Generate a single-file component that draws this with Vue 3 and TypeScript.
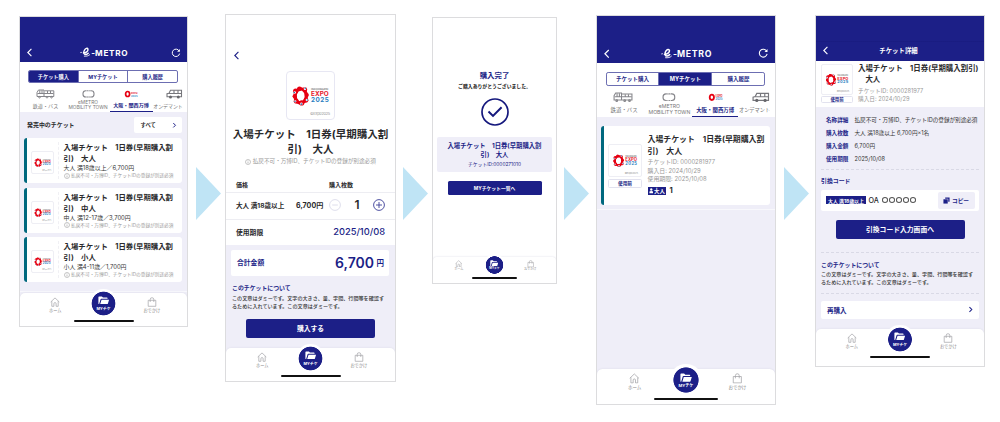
<script setup lang="ts">
type Kind = 'shop' | 'buy' | 'done' | 'mine' | 'detail'

const screens: Kind[] = ['shop', 'buy', 'done', 'mine', 'detail']
const segments = ['チケット購入', 'MYチケット', '購入履歴']
const activeSegment: Partial<Record<Kind, number>> = { shop: 0, mine: 1 }

const tickets = [
  { who: '大人', detail: '大人 満18歳以上／6,700円' },
  { who: '中人', detail: '中人 満12-17歳／3,700円' },
  { who: '小人', detail: '小人 満4-11歳／1,700円' },
]

const details = [
  ['名称詳細', '払戻不可・万博ID、チケットIDの登録が別途必須'],
  ['購入枚数', '大人 満18歳以上 6,700円×1名'],
  ['購入金額', '6,700円'],
  ['使用期限', '2025/10/08'],
]
</script>

<template>
  <svg class="defs" width="60" height="60" aria-hidden="true">
    <symbol id="expo" viewBox="0 0 49 49">
      <ellipse cx="14.3" cy="25" rx="5.9" ry="7.4" fill="none" stroke="#e60012" stroke-width="3.6" />
      <g fill="#e60012">
        <circle cx="9" cy="20" r="2.7" /><circle cx="13" cy="17.5" r="2.5" /><circle cx="18.5" cy="18.5" r="2.6" />
        <circle cx="20.6" cy="24" r="2.2" /><circle cx="19.8" cy="29.5" r="2.6" /><circle cx="15.3" cy="32.2" r="2.7" />
        <circle cx="9.6" cy="30.4" r="2.6" /><circle cx="8" cy="25.4" r="2.2" />
      </g>
      <g fill="#fff">
        <circle cx="8" cy="21.3" r="1.3" /><circle cx="18.7" cy="17.4" r="1.3" /><circle cx="20.8" cy="29.2" r="1.3" />
        <circle cx="15" cy="33" r="1.3" /><circle cx="8.6" cy="30.6" r="1.2" />
      </g>
      <g fill="#1b6fb5">
        <circle cx="7.6" cy="21.4" r=".8" /><circle cx="19" cy="17" r=".8" /><circle cx="21.2" cy="29.3" r=".8" />
        <circle cx="15" cy="33.5" r=".8" /><circle cx="8.3" cy="30.8" r=".7" />
      </g>
      <text x="25" y="18.9" font-size="2.4" textLength="18" fill="#666">OSAKA, KANSAI, JAPAN</text>
      <text x="25" y="25" font-size="6.6" font-weight="700" textLength="18.5" fill="#e6192a">EXPO</text>
      <text x="25" y="31.2" font-size="6.6" font-weight="700" textLength="18.5" fill="#2a80bf">2025</text>
      <text x="24" y="45.2" font-size="4" textLength="21" fill="#999">©Expo2025</text>
    </symbol>
    <symbol id="expo-mini" viewBox="0 0 14 10">
      <ellipse cx="3.6" cy="5" rx="2" ry="2.5" fill="none" stroke="#e60012" stroke-width="1.7" />
      <text x="7" y="4.8" font-size="2.7" font-weight="700" textLength="6.6" fill="#e6394a">EXPO</text>
      <text x="7" y="7.5" font-size="2.7" font-weight="700" textLength="6.6" fill="#4a95cc">2025</text>
    </symbol>
    <symbol id="brand" viewBox="0 0 12 11">
      <g fill="none" stroke="#fff" stroke-linecap="round">
        <path d="M.5 5.8c.5-.6 1-.5 1.3 .1" stroke-width=".9" />
        <path d="M3.6 6.3C6 6.2 8.7 4.4 8.3 2.4 7.9 .8 5.8 1.2 4.6 3.4 3.3 5.8 3.9 8 6 7.9 7 7.8 8 7.2 8.6 6.5" stroke-width="1.5" />
        <path d="M4.5 9.6C6.7 9.8 8.9 9.4 10.2 8.1" stroke-width=".9" />
      </g>
    </symbol>
    <symbol id="train" viewBox="0 0 19 10">
      <g fill="none" stroke="#85858a" stroke-width="1">
        <path d="M2.5 1h5.5v6.5H1V3.5zM8.5 1.800h9.3v5.700H8" />
        <path d="M1.5 4.5H17.5M3.8 1.2v3.3M6 1.2v3.3M11.5 2v2.5M14.5 2v2.5" />
        <circle cx="3.5" cy="8.2" r=".8" /><circle cx="11" cy="8.2" r=".8" /><circle cx="15.5" cy="8.2" r=".8" />
      </g>
    </symbol>
    <symbol id="loop" viewBox="0 0 13 9">
      <rect x="1" y="1.3" width="11" height="6.2" rx="2.8" fill="none" stroke="#85858a" stroke-width="1.1" />
      <path d="M4.5 1.3h4M4.5 7.5h4" stroke="#fff" stroke-width="1.2" stroke-dasharray=".6 1" />
    </symbol>
    <symbol id="van" viewBox="0 0 17 10">
      <g fill="none" stroke="#77777c" stroke-width="1.1">
        <path d="M1 7.8V4.8L3 4.3 4.5 1.3H15.5V7.8z" />
        <path d="M3 4.5H15.5M8 1.3v3.2M12 1.3v3.2" />
      </g>
      <circle cx="4.5" cy="7.9" r="1.5" fill="#66666b" /><circle cx="12.3" cy="7.9" r="1.5" fill="#66666b" />
    </symbol>
    <symbol id="back" viewBox="0 0 6 8">
      <path d="M4.7 .8 1.5 4l3.2 3.2" fill="none" stroke="currentColor" stroke-width="1" />
    </symbol>
    <symbol id="next" viewBox="0 0 6 8">
      <path d="M1.5 1.3 4.2 4 1.5 6.7" fill="none" stroke="currentColor" stroke-width="1.2" />
    </symbol>
    <symbol id="reload" viewBox="0 0 10 10">
      <path d="M8.2 3A3.7 3.7 0 1 0 8.6 5.6" fill="none" stroke="#fff" stroke-width="1" />
      <path d="M8.9 1v2.8H6.1z" fill="#fff" />
    </symbol>
    <symbol id="info" viewBox="0 0 10 10">
      <circle cx="5" cy="5" r="4.2" fill="none" stroke="#999" stroke-width=".9" />
      <path d="M5 4.3v3.2M5 2.5v1" stroke="#999" stroke-width="1" />
    </symbol>
    <symbol id="home" viewBox="0 0 10 10">
      <path d="M.7 5 5 .9 9.3 5M1.8 4.2V9.3H3.9V6.6Q3.9 5.6 5 5.6T6.1 6.6V9.3H8.2V4.2" fill="none" stroke="#a2a2a6" stroke-width=".7" stroke-linejoin="round" />
    </symbol>
    <symbol id="bag" viewBox="0 0 10 10">
      <path d="M1.2 3.3H8.8V9.3H1.2zM3.2 5V2.5Q3.2 .7 5 .7T6.8 2.5V5" fill="none" stroke="#a2a2a6" stroke-width=".7" stroke-linejoin="round" />
    </symbol>
    <symbol id="folder" viewBox="0 0 12 9">
      <path d="M.4 8V1.2Q.4 .5 1.1 .5H4L5.2 1.7H9.3Q10 1.7 10 2.4V3H3.4Q2.8 3 2.6 3.6L1.2 8.5Q.4 8.5 .4 8z" fill="#fff" />
      <path d="M3.7 3.9H11.6L10.3 8.1Q10.2 8.5 9.7 8.5H2.3z" fill="#fff" />
    </symbol>
  </svg>

  <main class="stage">
    <template v-for="(kind, i) in screens" :key="kind">
      <i v-if="i > 0" class="arrow" :class="'to-' + kind"></i>
      <section class="phone" :class="kind">
        <header v-if="kind === 'shop' || kind === 'mine'" class="bar">
          <svg class="chev"><use href="#back" /></svg>
          <div class="logo"><svg><use href="#brand" /></svg><b>-</b><strong>METRO</strong></div>
          <svg class="reload"><use href="#reload" /></svg>
        </header>
        <header v-if="kind === 'detail'" class="bar">
          <svg class="chev"><use href="#back" /></svg>
          <h1>チケット詳細</h1>
          <span class="reload"></span>
        </header>

        <div v-if="kind === 'shop' || kind === 'mine'" class="filters">
          <div class="segments">
            <span v-for="(s, n) in segments" :key="s" :class="{ on: activeSegment[kind] === n }">{{ s }}</span>
          </div>
          <div class="cats">
            <div class="cat wide1"><svg class="i-train"><use href="#train" /></svg><p>鉄道・バス</p></div>
            <div class="cat wide2"><svg class="i-loop"><use href="#loop" /></svg><p class="latin">eMETRO<br />MOBILITY TOWN</p></div>
            <div class="cat wide2 sel"><svg class="i-expo"><use href="#expo-mini" /></svg><p>大阪・関西万博</p></div>
            <div class="cat wide3"><svg class="i-van"><use href="#van" /></svg><p>オンデマント</p></div>
          </div>
        </div>

        <div class="content">
          <template v-if="kind === 'shop'">
            <div class="listhead">
              <h2>発売中のチケット</h2>
              <div class="select"><span>すべて</span><svg><use href="#next" /></svg></div>
            </div>
            <article v-for="t in tickets" :key="t.who" class="card">
              <svg class="expo"><use href="#expo" /></svg>
              <div class="txt">
                <h3>入場チケット　1日券(早期購入割<br />引)　{{ t.who }}</h3>
                <p>{{ t.detail }}</p>
                <small><svg><use href="#info" /></svg>払戻不可・万博ID、チケットIDの登録が別途必須</small>
              </div>
            </article>
            <div class="edge"></div>
          </template>

          <template v-else-if="kind === 'buy'">
            <div class="buytop">
              <svg class="chev"><use href="#back" /></svg>
              <svg class="expo"><use href="#expo" /></svg>
              <h2>入場チケット　1日券(早期購入割<br />引)　大人</h2>
              <small><svg><use href="#info" /></svg>払戻不可・万博ID、チケットIDの登録が別途必須</small>
            </div>
            <div class="cols"><span>価格</span><span>購入枚数</span></div>
            <div class="row price">
              <span class="kind">大人 満18歳以上</span><span class="yen">6,700円</span>
              <svg class="round off" viewBox="0 0 12 12"><circle cx="6" cy="6" r="5.4" /><path d="M3.2 6H8.8" /></svg>
              <b>1</b>
              <svg class="round" viewBox="0 0 12 12"><circle cx="6" cy="6" r="5.4" /><path d="M3 6H9M6 3V9" /></svg>
            </div>
            <div class="row limit"><span>使用期限</span><time>2025/10/08</time></div>
            <div class="total"><span>合計金額</span><strong>6,700</strong><em>円</em></div>
            <h4>このチケットについて</h4>
            <p class="para">この文章はダミーです。文字の大きさ、量、字間、行間等を確認す<br />るために入れています。この文章はダミーです。</p>
            <button>購入する</button>
          </template>

          <template v-else-if="kind === 'done'">
            <h2>購入完了</h2>
            <p class="thanks">ご購入ありがとうございました。</p>
            <svg class="check" viewBox="0 0 28 28">
              <circle cx="14" cy="14" r="13" fill="none" stroke="#15187d" stroke-width="1.7" />
              <path d="M7.5 13.5 12 17.9 20.6 9.3" fill="none" stroke="#15187d" stroke-width="2" />
            </svg>
            <div class="box">
              <h3>入場チケット　1日券(早期購入割<br />引)　大人</h3>
              <p>チケットID:0000271010</p>
            </div>
            <button>MYチケット一覧へ</button>
          </template>

          <template v-else-if="kind === 'mine'">
            <article class="card">
              <div class="thumb"><svg class="expo"><use href="#expo" /></svg><span>使用前</span></div>
              <div class="txt">
                <h3>入場チケット　1日券(早期購入割<br />引)　大人</h3>
                <p>チケットID: 0000281977</p>
                <p>購入日: 2024/10/29</p>
                <p>使用期限: 2025/10/08</p>
                <div class="count">
                  <span><svg viewBox="0 0 5 6"><circle cx="2.5" cy="1.6" r="1.3" fill="#fff" /><path d="M.5 5.7V4.2Q.5 3.3 2.5 3.3T4.5 4.2V5.7z" fill="#fff" /></svg>大人</span><b>1</b>
                </div>
              </div>
            </article>
            <div class="edge"></div>
          </template>

          <template v-else>
            <div class="summary">
              <div class="thumb"><svg class="expo"><use href="#expo" /></svg><span>使用前</span></div>
              <div class="txt">
                <h3>入場チケット　1日券(早期購入割引)<br />　大人</h3>
                <p>チケットID: 0000281977</p>
                <p>購入日: 2024/10/29</p>
              </div>
            </div>
            <dl>
              <div v-for="d in details" :key="d[0]"><dt>{{ d[0] }}</dt><dd>{{ d[1] }}</dd></div>
            </dl>
            <h4 class="codehead">引換コード</h4>
            <div class="code">
              <span class="tag">大人 満18歳以上</span><span class="oa">OA</span>
              <span class="dots"><i v-for="n in 5" :key="n"></i></span>
              <span class="copy"><svg viewBox="0 0 8 8"><path d="M2.5 .5H7.5V5.5H6V2H2.5z" fill="#1c1f87" /><rect x=".5" y="2.6" width="4.9" height="4.9" fill="#1c1f87" /></svg>コピー</span>
            </div>
            <button>引換コード入力画面へ</button>
            <div class="about">
              <h4>このチケットについて</h4>
              <p class="para">この文章はダミーです。文字の大きさ、量、字間、行間等を確認す<br />るために入れています。この文章はダミーです。</p>
            </div>
            <div class="again"><span>再購入</span><svg><use href="#next" /></svg></div>
          </template>
        </div>

        <nav>
          <div class="item"><svg><use href="#home" /></svg><span>ホーム</span></div>
          <div class="mid"><svg><use href="#folder" /></svg><span>MYチケ</span></div>
          <div class="item"><svg><use href="#bag" /></svg><span>おでかけ</span></div>
          <i class="grip"></i>
        </nav>
      </section>
    </template>
  </main>
</template>

<style>
body { background: #fff; }
</style>

<style scoped>
* { box-sizing: border-box; margin: 0; padding: 0; }
.defs { position: absolute; visibility: hidden; }
svg { display: block; flex: none; }
svg text { font-family: Inter, sans-serif; }
i, em { font-style: normal; }

.stage {
  display: flex;
  align-items: flex-start;
  width: 1000px;
  height: 422px;
  overflow: hidden;
  font-family: Inter, "Noto Sans CJK JP", sans-serif;
  color: #2a2a2c;
}
.arrow {
  flex: none;
  width: 25px;
  height: 53px;
  margin: 167px 4px 0 8px;
  background: #bfe4f5;
  clip-path: polygon(0 0, 100% 50%, 0 100%);
}
.arrow.to-done { margin-left: 7px; }
.arrow.to-mine { margin: 167px 7px 0 7px; }
.arrow.to-detail { margin-right: 6px; }

.phone {
  --u: 1px;
  --blue: #1c1f87;
  --lav: #efeef8;
  --nav-h: 33px;
  --head-h: 45px;
  flex: none;
  display: flex;
  flex-direction: column;
  border: 1px solid #dcdcde;
  background: var(--lav);
  overflow: hidden;
  white-space: nowrap;
}
.shop { width: 169px; height: 311px; margin: 16px 0 0 19px; }
.buy { width: 171px; height: 368px; margin-top: 14px; }
.done { --u: .74px; --nav-h: 26px; width: 125px; height: 267px; margin-top: 17px; background: #fff; }
.mine { --u: 1.065px; --nav-h: 35px; --head-h: 47px; width: 180px; height: 390px; margin-top: 15px; }
.detail { --nav-h: 37px; width: 170px; height: 352px; margin-top: 15px; }

/* header */
.bar {
  flex: none;
  height: var(--head-h);
  padding: calc(var(--u) * 26) calc(var(--u) * 6) 0;
  display: flex;
  align-items: center;
  justify-content: space-between;
  background: var(--blue);
  color: #fff;
}
.chev { width: calc(var(--u) * 7); height: calc(var(--u) * 9); }
.bar .reload { width: calc(var(--u) * 10); height: calc(var(--u) * 10); }
.logo { display: flex; align-items: center; margin-left: 4px; line-height: 1; }
.logo svg { width: calc(var(--u) * 11.5); height: calc(var(--u) * 10.5); }
.logo b { font-size: calc(var(--u) * 8); }
.logo strong { font-size: calc(var(--u) * 8.2); font-weight: 700; letter-spacing: .08em; margin-top: calc(var(--u) * 1.2); }
.logo b { margin-top: calc(var(--u) * 1.2); }
.bar h1 { font-size: 6.4px; line-height: 8px; font-weight: 700; }
.detail .bar { padding-top: 24.5px; background: linear-gradient(#1c1f87 25px, #17197c 25px, #1c1f87 26px); }

/* segmented control and categories */
.filters { flex: none; background: #fff; padding-top: 7.5px; }
.mine .filters { padding-top: 9px; }
.segments {
  display: flex;
  height: calc(var(--u) * 13.5);
  margin: 0 calc(var(--u) * 9) 0 calc(var(--u) * 8);
  border: .8px solid #6c6eb2;
  border-radius: calc(var(--u) * 2);
  overflow: hidden;
  font-size: calc(var(--u) * 5.2);
  font-weight: 700;
  color: var(--blue);
}
.segments span { flex: 1; display: flex; align-items: center; justify-content: center; }
.segments span + span { border-left: 1px solid #6c6eb2; }
.segments .on { background: var(--blue); color: #fff; }
.cats { display: flex; height: calc(var(--u) * 29); padding-left: calc(var(--u) * 4.5); }
.cat { flex: none; display: flex; flex-direction: column; align-items: center; padding-top: calc(var(--u) * 5.5); }
.cat p {
  flex: 1;
  display: flex;
  align-items: center;
  font-size: calc(var(--u) * 5.1);
  line-height: calc(var(--u) * 5);
  color: #777;
  padding-top: calc(var(--u) * 1.5);
}
.cat p.latin { display: block; text-align: center; font-size: calc(var(--u) * 4.8); padding-top: calc(var(--u) * 1.4); }
.wide1 { width: calc(var(--u) * 42); }
.wide2 { width: calc(var(--u) * 43); }
.wide3 { width: calc(var(--u) * 31); }
.wide3 p { font-size: calc(var(--u) * 4.9); }
.cat svg { height: calc(var(--u) * 10); }
.i-train { width: calc(var(--u) * 19); margin-right: calc(var(--u) * 1); }
.i-loop { width: calc(var(--u) * 13); }
.i-expo { width: calc(var(--u) * 14); }
.i-van { width: calc(var(--u) * 17); margin-left: calc(var(--u) * 12); }
.cat.sel { border-bottom: 1px solid var(--blue); }
.cat.sel p { color: var(--blue); font-weight: 700; }

.content { flex: 1; min-height: 0; display: flex; flex-direction: column; }
.edge { height: 1px; margin-top: 4px; background: #f8f8fc; }

/* ticket list */
.listhead { display: flex; align-items: center; justify-content: space-between; height: 16px; margin: 5px 5px 5px 7px; }
.listhead h2 { font-size: 5.95px; line-height: 8px; font-weight: 700; }
.select {
  display: flex;
  align-items: center;
  justify-content: space-between;
  width: 48px;
  height: 15.5px;
  padding: 0 5px 0 6.5px;
  border-radius: 2px;
  background: #fff;
  font-size: 5.3px;
  font-weight: 700;
}
.select svg { width: 5px; height: 6.5px; color: var(--blue); }
.card {
  display: flex;
  margin: 0 5px 4.6px 4px;
  border-left: 3px solid #00687e;
  border-radius: 3px;
  background: #fff;
}
.expo { border: 1px solid #eeeef4; border-radius: 2px; background: #fff; }
.shop .card { height: 45px; flex: none; }
.shop .card .expo { width: 23px; height: 23px; margin: 13px 0 0 4px; }
.shop .card .txt { margin: 4px 0 4px 4px; padding-left: 4.5px; border-left: 1px dashed #f0f0f4; }
.card h3 { font-size: 7.4px; line-height: 11px; font-weight: 700; }
.shop .card p { font-size: 5.9px; line-height: 8px; color: #333; }
small { display: flex; align-items: center; font-size: 4.68px; line-height: 7.5px; color: #999; }
small svg { width: 6px; height: 6px; margin-right: 1.5px; }

/* purchase */
.buytop { flex: none; height: 162px; display: flex; flex-direction: column; align-items: center; background: #fff; }
.buytop .chev { align-self: flex-start; margin: 36px 0 0 7px; color: var(--blue); }
.buytop .expo { width: 49px; height: 49px; margin-top: 10.5px; border-radius: 4px; border-color: #e7e7f3; }
.buytop h2 { margin-top: 7px; font-size: 10.5px; line-height: 15.7px; text-align: center; font-weight: 700; }
.buytop small { font-size: 5.6px; }
.cols { flex: none; height: 15px; padding: 3px 10px 0; display: flex; background: #fff; font-size: 6px; line-height: 9px; font-weight: 700; }
.cols span { flex: none; width: 93px; }
.row { flex: none; display: flex; align-items: center; height: 26.5px; padding: 0 10px; border-top: 1px solid #ededf2; background: #fff; font-weight: 700; }
.price { font-size: 6.6px; padding-bottom: 1.5px; }
.price .kind { width: 60px; }
.price .yen { width: 33px; font-size: 7.1px; }
.round { width: 12px; height: 12px; fill: none; stroke: #3c3e97; stroke-width: .9; }
.round.off { stroke: #dadaea; }
.price b { width: 32px; text-align: center; font-size: 12px; font-weight: 600; line-height: 14px; padding-bottom: 1px; }
.limit { font-size: 6.8px; justify-content: space-between; padding-bottom: 1.5px; }
.limit time { font-size: 9.3px; font-weight: 500; color: var(--blue); }
.total {
  flex: none;
  display: flex;
  align-items: center;
  height: 26px;
  margin: 5px 6px 0 5px;
  padding: 0 5px 2px 6px;
  border-radius: 2px;
  background: #fff;
  color: var(--blue);
  font-weight: 700;
}
.total span { flex: 1; font-size: 6.8px; }
.total strong { font-size: 14px; font-weight: 600; }
.total em { margin-left: 2.5px; font-size: 7.5px; }
h4 { font-size: 5.9px; line-height: 8px; font-weight: 700; color: var(--blue); }
.buy h4 { margin: 7.5px 0 0 6px; }
.para { font-size: 5.1px; line-height: 7.8px; color: #333; font-weight: 500; }
.buy .para { margin: 3.5px 0 0 6px; }
button {
  display: block;
  flex: none;
  border: 0;
  border-radius: 2px;
  background: var(--blue);
  color: #fff;
  font-family: inherit;
  font-weight: 700;
}
.buy button { width: 129px; height: 19px; margin: 8.5px 0 0 20px; padding-bottom: 1px; font-size: 6.8px; }

/* completion */
.done .content { align-items: center; }
.done h2 { margin-top: 52.5px; font-size: 7.4px; line-height: 10px; font-weight: 700; color: var(--blue); }
.thanks { margin-top: 1.5px; font-size: 4.87px; line-height: 8px; font-weight: 700; color: #111; }
.check { width: 28px; height: 28px; margin-top: 8px; }
.box { width: 115px; height: 35px; margin-top: 11px; padding-top: 4.5px; border-radius: 2px; background: var(--lav); color: var(--blue); text-align: center; }
.box h3 { font-size: 6.35px; line-height: 9.5px; font-weight: 700; }
.box p { font-size: 4.8px; line-height: 7px; }
.done button { width: 94px; height: 13.5px; margin-top: 9px; padding-bottom: .5px; font-size: 4.8px; border-radius: 1.5px; }

/* owned ticket */
.mine .card { flex: none; height: 79px; margin: 9px 5px 0 4px; }
.thumb { display: flex; flex-direction: column; flex: none; }
.thumb span {
  display: flex;
  align-items: center;
  justify-content: center;
  margin-top: 1.5px;
  border: 1px solid #e2e2ef;
  border-radius: 1.5px;
  background: #fff;
  color: var(--blue);
  font-weight: 700;
}
.mine .thumb { width: 34px; margin: 18px 0 0 4px; }
.mine .thumb .expo { width: 34px; height: 33px; }
.mine .thumb span { height: 9px; font-size: 4.7px; }
.mine .txt { margin: 8px 0 0 5.5px; }
.mine h3 { font-size: 7.9px; line-height: 11.7px; }
.mine .txt p { font-size: 5.9px; line-height: 8.4px; color: #999; }
.mine h3 + p { margin-top: .8px; }
.count { display: flex; align-items: center; margin-top: 3.2px; }
.count span { display: flex; align-items: center; justify-content: center; gap: 1px; width: 18.5px; height: 8px; background: var(--blue); color: #fff; font-size: 5.4px; font-weight: 700; }
.count svg { width: 4.5px; height: 5.5px; }
.count b { margin-left: 3.5px; font-size: 7.5px; line-height: 8px; }

/* ticket detail */
.summary { flex: none; display: flex; height: 46px; padding: 3px 5px 0; background: #fff; }
.detail .thumb { width: 32px; }
.detail .thumb .expo { width: 32px; height: 31px; }
.detail .thumb span { height: 7.5px; margin-top: .5px; font-size: 4.4px; }
.detail .txt { margin-left: 5px; }
.detail h3 { font-size: 7.45px; line-height: 10.9px; font-weight: 700; }
.detail .txt p { font-size: 5.7px; line-height: 7.3px; color: #999; }
.detail h3 + p { margin-top: 1.6px; }
dl { flex: none; margin: 0 5px; padding: 6.5px 5px 0; height: 63px; border-bottom: 1px dashed #d9d9e6; }
dl div { display: flex; height: 13px; align-items: center; font-size: 5.6px; line-height: 8px; }
dt { flex: none; width: 28.5px; color: var(--blue); font-weight: 700; }
dd { flex: none; color: #333; }
.codehead { margin: 7px 0 0 5px; }
.code { flex: none; display: flex; align-items: center; height: 21px; margin: 4.5px 5px 0; padding: 0 4.5px 0 5px; border-radius: 2px; background: #fff; }
.tag { display: flex; align-items: center; justify-content: center; width: 40px; height: 7.5px; background: var(--blue); color: #fff; font-size: 4.9px; font-weight: 700; }
.oa { margin-left: 2.5px; font-size: 7.2px; font-weight: 500; }
.dots { display: flex; gap: 1px; margin-left: 3.5px; }
.dots i { width: 6px; height: 5.5px; border: .7px solid #555; border-radius: 50%; }
.copy { display: flex; align-items: center; justify-content: center; gap: 2px; width: 37px; height: 17px; margin-left: auto; border-radius: 2px; background: var(--lav); color: var(--blue); font-size: 5.7px; font-weight: 700; }
.copy svg { width: 7px; height: 7px; }
.detail button { width: 129px; height: 19px; margin: 9.5px 0 0 19.5px; padding-bottom: 1px; font-size: 6.8px; }
.about { flex: none; height: 42px; margin: 13px 5px 0; padding-top: 7.5px; border: dashed #d9d9e6; border-width: 1px 0; }
.about .para { margin-top: 2.8px; }
.again { flex: none; display: flex; align-items: center; justify-content: space-between; height: 18.5px; margin: 6.5px 5px 0; padding: 0 6px; border-radius: 2px; background: #fff; color: var(--blue); font-size: 6.5px; font-weight: 700; }
.again svg { width: 5.5px; height: 7px; }

/* bottom navigation */
nav {
  position: relative;
  flex: none;
  display: flex;
  justify-content: center;
  height: var(--nav-h);
  border-radius: calc(var(--u) * 5) calc(var(--u) * 5) 0 0;
  background: #fff;
  box-shadow: 0 0 2px #d8d8e4;
}
.item { flex: none; display: flex; flex-direction: column; align-items: center; width: calc(var(--u) * 34.3); padding-top: calc(var(--u) * 4.2); }
.item svg { width: calc(var(--u) * 10); height: calc(var(--u) * 10); }
.item span { font-size: calc(var(--u) * 4.2); line-height: calc(var(--u) * 8); color: #888; }
.mid {
  flex: none;
  display: flex;
  flex-direction: column;
  align-items: center;
  width: calc(var(--u) * 29.5);
  height: calc(var(--u) * 29.5);
  margin: calc(var(--u) * -4.3) calc(var(--u) * 16.4) 0;
  padding: calc(var(--u) * 7.7) 0 0;
  border-radius: 50%;
  background: radial-gradient(circle, var(--blue) calc(var(--u) * 11.5), #fff calc(var(--u) * 12.2));
}
.mid svg { width: calc(var(--u) * 11.5); height: calc(var(--u) * 8.6); }
.mid span { margin-top: calc(var(--u) * .8); font-size: calc(var(--u) * 3.8); line-height: calc(var(--u) * 6.5); font-weight: 700; color: #fff; }
.grip {
  position: absolute;
  left: 50%;
  top: calc(var(--u) * 27);
  width: calc(var(--u) * 60);
  height: calc(var(--u) * 2.2);
  margin-left: calc(var(--u) * -30);
  border-radius: 2px;
  background: #111;
}
</style>
